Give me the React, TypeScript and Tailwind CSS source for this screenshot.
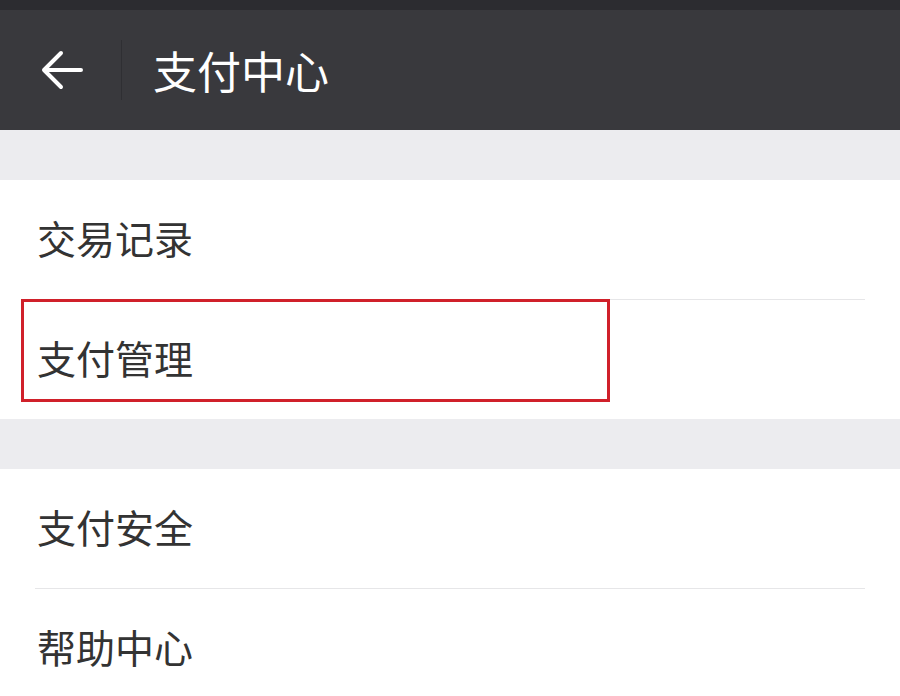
import React from "react";

const font = { fontFamily: '"Noto Sans CJK SC", "Noto Sans", sans-serif' };

function Row({ label, highlight = false }: { label: string; highlight?: boolean }) {
  return (
    <div className="relative flex h-[119px] items-center bg-white pb-[4px] pl-[37px]">
      <span className="text-[39px] leading-none text-[#333333]">{label}</span>
      {highlight && (
        <div className="absolute left-[21px] top-[-1px] h-[103px] w-[589px] border-[3px] border-[#d0202a]" />
      )}
    </div>
  );
}

function Divider() {
  return <div className="mx-[35px] h-px bg-[#e6e6e8]" />;
}

export default function App() {
  return (
    <div className="h-[696px] w-[900px] overflow-hidden bg-white" style={font}>
      <div className="h-[10px] bg-[#2c2c30]" />
      <header className="flex h-[120px] items-center bg-[#39393d]">
        <div className="flex w-[121px] items-center justify-center pl-[2px]">
          <svg width="46" height="46" viewBox="0 0 46 46" fill="none">
            <path
              d="M42 23H5M22 6L5 23l17 17"
              stroke="#ffffff"
              strokeWidth="4"
              strokeLinecap="round"
              strokeLinejoin="round"
            />
          </svg>
        </div>
        <div className="h-[60px] w-px bg-[#2f2f33]" />
        <h1 className="ml-[31px] text-[44px] font-normal leading-none text-white">
          支付中心
        </h1>
      </header>
      <div className="h-[50px] bg-[#ececef]" />
      <Row label="交易记录" />
      <Divider />
      <Row label="支付管理" highlight />
      <div className="h-[50px] bg-[#ececef]" />
      <Row label="支付安全" />
      <Divider />
      <Row label="帮助中心" />
    </div>
  );
}
